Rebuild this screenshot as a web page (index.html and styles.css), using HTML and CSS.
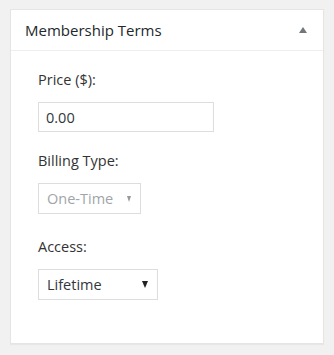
FILE: index.html
```html
<!DOCTYPE html>
<html lang="en">
<head>
    <meta charset="UTF-8">
    <title>Membership Terms</title>
    <link rel="stylesheet" href="styles.css">
</head>
<body>

<div class="postbox">
    <div class="postbox-header">
        <h2>Membership Terms</h2>
        <span class="toggle"></span>
    </div>
    <div class="inside">
        <div class="field">
            <label for="price">Price ($):</label>
            <input type="text" id="price" value="0.00">
        </div>
        <div class="field billing">
            <label>Billing Type:</label>
            <div class="select disabled"><span>One-Time</span><i class="caret"></i></div>
        </div>
        <div class="field">
            <label>Access:</label>
            <div class="select access"><span>Lifetime</span><i class="caret"></i></div>
        </div>
    </div>
</div>

</body>
</html>
```

FILE: styles.css
```css
body {
    font-family: 'Open Sans', sans-serif;
    background-color: #f1f1f1;
    color: #23282d;
    margin: 0;
    padding: 9px 10px 11px 10px;
}

.postbox {
    background: #fff;
    border: 1px solid #e5e5e5;
    box-shadow: 0 1px 1px rgba(0, 0, 0, 0.04);
    height: 335px;
    box-sizing: border-box;
}

.postbox-header {
    display: flex;
    align-items: center;
    justify-content: space-between;
    height: 40px;
    padding: 0 16px 0 14px;
    border-bottom: 1px solid #eee;
}

.postbox-header h2 {
    font-size: 15px;
    font-weight: normal;
    margin: 0;
}

.toggle {
    width: 0;
    height: 0;
    border-left: 4px solid transparent;
    border-right: 4px solid transparent;
    border-bottom: 6px solid #72777c;
}

.inside {
    padding: 19px 27px 12px 27px;
}

.field label {
    display: block;
    font-size: 14.5px;
    color: #333;
    margin-bottom: 13px;
}

.field {
    margin-bottom: 19px;
}

.field.billing {
    margin-bottom: 23px;
}

input[type="text"] {
    display: block;
    width: 176px;
    height: 30px;
    box-sizing: border-box;
    border: 1px solid #ddd;
    padding: 0 7px;
    font-family: inherit;
    font-size: 14.5px;
    color: #32373c;
}

.select {
    display: inline-flex;
    align-items: center;
    justify-content: space-between;
    height: 31px;
    box-sizing: border-box;
    border: 1px solid #ddd;
    padding: 0 9px 0 8px;
    font-size: 14.5px;
    color: #32373c;
}

.select.disabled {
    width: 103px;
    padding-right: 9px;
    color: #a0a5aa;
}

.select.access {
    width: 120px;
}

.caret {
    width: 0;
    height: 0;
    border-left: 3.5px solid transparent;
    border-right: 3.5px solid transparent;
    border-top: 7px solid #222;
}

.select.disabled .caret {
    border-left-width: 2.5px;
    border-right-width: 2.5px;
    border-top: 6px solid #999;
}
```
